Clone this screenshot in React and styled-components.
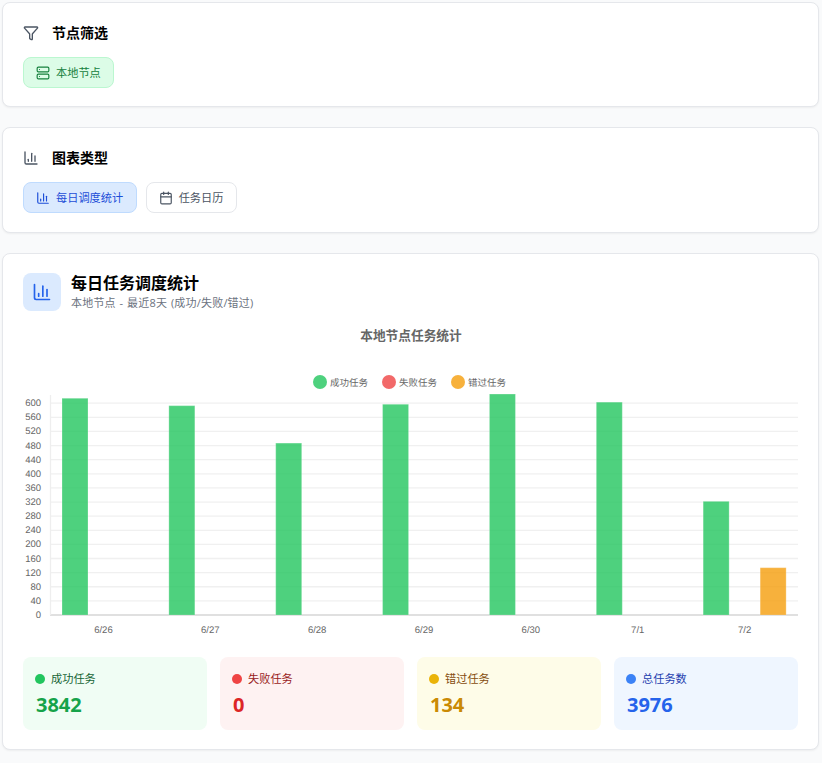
import React from 'react';
import styled, { createGlobalStyle } from 'styled-components';
import { Funnel, Server, ChartColumn, Calendar } from 'lucide-react';

const GlobalStyle = createGlobalStyle`
  html, body {
    margin: 0;
    padding: 0;
    background: #f9fafb;
    font-family: "Open Sans", "Noto Sans CJK SC", sans-serif;
  }
  * {
    box-sizing: border-box;
  }
`;

const STATS = [
  { key: 'ok', label: '成功任务', value: 3842, bg: '#f0fdf4', dot: '#22c55e', text: '#166534', num: '#16a34a' },
  { key: 'fail', label: '失败任务', value: 0, bg: '#fef2f2', dot: '#ef4444', text: '#991b1b', num: '#dc2626' },
  { key: 'miss', label: '错过任务', value: 134, bg: '#fefce8', dot: '#eab308', text: '#854d0e', num: '#ca8a04' },
  { key: 'total', label: '总任务数', value: 3976, bg: '#eff6ff', dot: '#3b82f6', text: '#1e40af', num: '#2563eb' },
];

const DAYS = [
  { label: '6/26', ok: 614, miss: 0 },
  { label: '6/27', ok: 593, miss: 0 },
  { label: '6/28', ok: 487, miss: 0 },
  { label: '6/29', ok: 597, miss: 0 },
  { label: '6/30', ok: 626, miss: 0 },
  { label: '7/1', ok: 603, miss: 0 },
  { label: '7/2', ok: 322, miss: 134 },
];

const LEGEND = [
  { label: '成功任务', color: 'rgba(34,197,94,0.8)', x: 290, tx: 307 },
  { label: '失败任务', color: 'rgba(239,68,68,0.8)', x: 359, tx: 376 },
  { label: '错过任务', color: 'rgba(245,158,11,0.8)', x: 428, tx: 445 },
];

// chart area, in svg coordinates
const LEFT = 27;
const RIGHT = 775;
const BASE = 295;
const STEP = (RIGHT - LEFT) / 7;
const PER_UNIT = 0.353;
const TICKS = Array.from({ length: 16 }, (_, i) => i * 40);

const TaskChart = () => (
  <ChartSvg viewBox="0 0 775 326">
    <ChartTitle x="388" y="20">本地节点任务统计</ChartTitle>
    {LEGEND.map((item) => (
      <g key={item.label}>
        <circle cx={item.x + 7} cy="62" r="7" fill={item.color} />
        <LegendText x={item.tx} y="65.5">{item.label}</LegendText>
      </g>
    ))}
    {TICKS.map((tick) => {
      const y = BASE - tick * PER_UNIT;
      return (
        <g key={tick}>
          <line x1={LEFT} x2={RIGHT} y1={y} y2={y} stroke={tick === 0 ? '#d6d6d6' : '#f0f0f0'} strokeWidth="1.3" />
          <TickText x={LEFT - 9} y={y + 3} textAnchor="end">{tick}</TickText>
        </g>
      );
    })}
    <line x1={LEFT + 0.5} x2={LEFT + 0.5} y1="75" y2={BASE} stroke="#eeeeee" strokeWidth="1.3" />
    {DAYS.map((day, i) => {
      const start = LEFT + i * STEP;
      const okHeight = day.ok * PER_UNIT;
      const missHeight = day.miss * PER_UNIT;
      return (
        <g key={day.label}>
          <rect
            x={start + 12}
            y={BASE - okHeight}
            width="26"
            height={okHeight}
            fill="rgba(34,197,94,0.8)"
            stroke="rgba(255,255,255,0.25)"
          />
          {day.miss > 0 && (
            <rect
              x={start + 69}
              y={BASE - missHeight}
              width="26"
              height={missHeight}
              fill="rgba(245,158,11,0.8)"
              stroke="rgba(255,255,255,0.25)"
            />
          )}
          <TickText x={start + STEP / 2} y="313" textAnchor="middle">{day.label}</TickText>
        </g>
      );
    })}
  </ChartSvg>
);

const App = () => (
  <Page>
    <GlobalStyle />
    <Card>
      <SectionHead>
        <Funnel size={16} color="#4b5563" />
        <SectionTitle>节点筛选</SectionTitle>
      </SectionHead>
      <ButtonRow>
        <ToggleButton $tone="green">
          <Server size={14} />
          <ButtonLabel>本地节点</ButtonLabel>
        </ToggleButton>
      </ButtonRow>
    </Card>
    <Card>
      <SectionHead>
        <ChartColumn size={16} color="#4b5563" />
        <SectionTitle>图表类型</SectionTitle>
      </SectionHead>
      <ButtonRow>
        <ToggleButton $tone="blue">
          <ChartColumn size={14} />
          <ButtonLabel>每日调度统计</ButtonLabel>
        </ToggleButton>
        <ToggleButton>
          <Calendar size={14} />
          <ButtonLabel>任务日历</ButtonLabel>
        </ToggleButton>
      </ButtonRow>
    </Card>
    <ChartCard>
      <ChartHead>
        <IconBox>
          <ChartColumn size={20} color="#2563eb" />
        </IconBox>
        <div>
          <ChartHeading>每日任务调度统计</ChartHeading>
          <ChartSub>本地节点 - 最近8天 (成功/失败/错过)</ChartSub>
        </div>
      </ChartHead>
      <TaskChart />
      <StatGrid>
        {STATS.map((stat) => (
          <StatCard key={stat.key} $bg={stat.bg}>
            <StatLabel $color={stat.text}>
              <StatDot $color={stat.dot} />
              {stat.label}
            </StatLabel>
            <StatValue $color={stat.num}>{stat.value}</StatValue>
          </StatCard>
        ))}
      </StatGrid>
    </ChartCard>
  </Page>
);

const TONES = {
  green: { bg: '#dcfce7', border: '#bbf7d0', color: '#15803d' },
  blue: { bg: '#dbeafe', border: '#bfdbfe', color: '#1d4ed8' },
  plain: { bg: '#ffffff', border: '#e5e7eb', color: '#4b5563' },
};

const Page = styled.div`
  display: flex;
  flex-direction: column;
  gap: 20px;
  width: 822px;
  min-height: 763px;
  padding: 2px 3px 12px 2px;
`;
const Card = styled.section`
  padding: 19px 20px 18.33px;
  background: #ffffff;
  border: 1px solid #e5e7eb;
  border-radius: 8px;
  box-shadow: 0 1px 2px rgba(0, 0, 0, 0.05);
`;
const ChartCard = styled(Card)`
  padding-bottom: 19px;
`;
const SectionHead = styled.div`
  display: flex;
  align-items: center;
  gap: 13px;
  height: 22px;
  margin-bottom: 13px;
`;
const SectionTitle = styled.h3`
  margin: 0 0 2px;
  font-size: 14px;
  font-weight: 700;
  color: #000000;
`;
const ButtonRow = styled.div`
  display: flex;
  gap: 9px;
`;
const ToggleButton = styled.button`
  display: flex;
  align-items: center;
  gap: 6px;
  height: 31px;
  padding: 0 12.5px 0 12px;
  font-family: inherit;
  font-size: 11.2px;
  color: ${(p) => TONES[p.$tone || 'plain'].color};
  background: ${(p) => TONES[p.$tone || 'plain'].bg};
  border: 1px solid ${(p) => TONES[p.$tone || 'plain'].border};
  border-radius: 8px;
`;
const ButtonLabel = styled.span`
  margin-bottom: 2px;
`;
const ChartHead = styled.div`
  display: flex;
  align-items: center;
  gap: 10px;
  margin-bottom: 9.33px;
`;
const IconBox = styled.div`
  display: flex;
  align-items: center;
  justify-content: center;
  width: 38px;
  height: 38px;
  background: #dbeafe;
  border-radius: 8px;
`;
const ChartHeading = styled.h2`
  margin: 0;
  font-size: 16px;
  line-height: 20px;
  font-weight: 700;
  color: #000000;
`;
const ChartSub = styled.p`
  margin: 2.5px 0 0;
  font-size: 11px;
  line-height: 15px;
  letter-spacing: 0.2px;
  word-spacing: 0.7px;
  color: #6b7280;
`;
const ChartSvg = styled.svg`
  display: block;
  width: 775px;
  height: 326px;
`;
const ChartTitle = styled.text`
  font-family: "Open Sans", "Noto Sans CJK SC", sans-serif;
  font-size: 12.7px;
  font-weight: 700;
  text-anchor: middle;
  fill: #666666;
`;
const LegendText = styled.text`
  font-family: "Liberation Sans", "Noto Sans CJK SC", sans-serif;
  font-size: 9.5px;
  fill: #666666;
  text-rendering: geometricPrecision;
`;
const TickText = styled.text`
  font-family: "Liberation Sans", "Noto Sans CJK SC", sans-serif;
  font-size: 9.5px;
  fill: #666666;
  text-rendering: geometricPrecision;
`;
const StatGrid = styled.div`
  display: grid;
  grid-template-columns: repeat(4, 1fr);
  gap: 13px;
  margin-top: 11px;
`;
const StatCard = styled.div`
  height: 73px;
  padding: 13px 12px 12px;
  background: ${(p) => p.$bg};
  border-radius: 8px;
`;
const StatLabel = styled.div`
  display: flex;
  align-items: center;
  gap: 6px;
  font-size: 11.2px;
  line-height: 18px;
  color: ${(p) => p.$color};
`;
const StatDot = styled.span`
  width: 10px;
  height: 10px;
  border-radius: 50%;
  background: ${(p) => p.$color};
`;
const StatValue = styled.div`
  margin-top: 3px;
  padding-left: 1px;
  font-size: 20px;
  line-height: 28px;
  font-weight: 700;
  color: ${(p) => p.$color};
`;

export default App;
